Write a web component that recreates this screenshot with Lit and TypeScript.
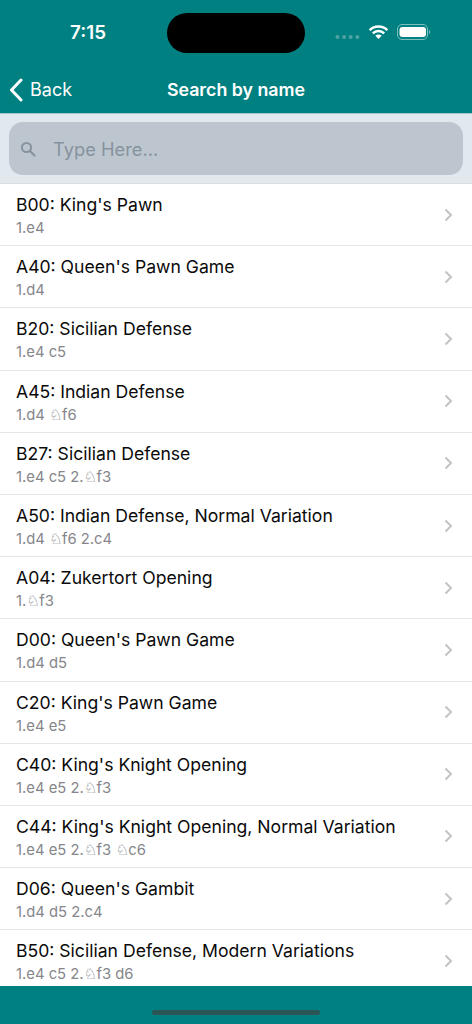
import { LitElement, html, css, svg } from "lit";
import { customElement } from "lit/decorators.js";

const N = "\u2658";
const rows: [string, string][] = [
  ["B00: King's Pawn", "1.e4"],
  ["A40: Queen's Pawn Game", "1.d4"],
  ["B20: Sicilian Defense", "1.e4 c5"],
  ["A45: Indian Defense", `1.d4 ${N}f6`],
  ["B27: Sicilian Defense", `1.e4 c5 2.${N}f3`],
  ["A50: Indian Defense, Normal Variation", `1.d4 ${N}f6 2.c4`],
  ["A04: Zukertort Opening", `1.${N}f3`],
  ["D00: Queen's Pawn Game", "1.d4 d5"],
  ["C20: King's Pawn Game", "1.e4 e5"],
  ["C40: King's Knight Opening", `1.e4 e5 2.${N}f3`],
  ["C44: King's Knight Opening, Normal Variation", `1.e4 e5 2.${N}f3 ${N}c6`],
  ["D06: Queen's Gambit", "1.d4 d5 2.c4"],
  ["B50: Sicilian Defense, Modern Variations", `1.e4 c5 2.${N}f3 d6`],
];

const moves = (s: string) =>
  s.split(N).map((part, i) => (i === 0 ? part : html`<span class="knight">${N}</span>${part}`));

@customElement("app-root")
export class AppRoot extends LitElement {
  static styles = css`
    :host {
      display: flex;
      flex-direction: column;
      width: 472px;
      height: 1024px;
      overflow: hidden;
      background: #fff;
      font-family: Inter, "Liberation Sans", "DejaVu Sans", sans-serif;
      color: #0a0a0a;
    }
    .top {
      height: 113px;
      flex: none;
      background: #008080;
      color: #fff;
      box-sizing: border-box;
      display: flex;
      flex-direction: column;
    }
    .status {
      height: 66px;
      flex: none;
      display: grid;
      grid-template-columns: 167px 138px 1fr;
      box-sizing: border-box;
      padding-top: 13px;
    }
    .time {
      font-size: 18.8px;
      font-weight: 600;
      text-align: center;
      padding: 7px 0 0 9px;
      line-height: 26px;
    }
    .island {
      height: 40px;
      border-radius: 20px;
      background: #000;
    }
    .sys {
      display: flex;
      align-items: flex-start;
      padding: 11px 0 0 30px;
    }
    .sys svg { display: block; }
    .nav {
      position: relative;
      flex: 1;
      display: flex;
      align-items: center;
      justify-content: center;
    }
    .title {
      font-size: 17.8px;
      font-weight: 600;
    }
    .back {
      position: absolute;
      left: 9px;
      top: 11px;
      display: flex;
      align-items: center;
      gap: 7px;
      font-size: 18px;
      line-height: 26px;
    }
    .searchbar {
      height: 71px;
      flex: none;
      box-sizing: border-box;
      background: #e1e8ee;
      padding: 8px 9px;
      border-top: 1px solid #a8c4c8;
      border-bottom: 1px solid #dcdfe2;
    }
    .field {
      height: 100%;
      box-sizing: border-box;
      border-radius: 14px;
      background: #bdc6cf;
      display: flex;
      align-items: center;
      padding-left: 11px;
      gap: 17px;
      color: #86939e;
      font-size: 18.3px;
    }
    .list {
      flex: 1;
      min-height: 0;
      overflow: hidden;
    }
    .row {
      height: 62.2px;
      box-sizing: border-box;
      border-bottom: 1px solid #e6e6e6;
      padding: 9px 19px 0 16px;
      display: flex;
      align-items: center;
      justify-content: space-between;
    }
    .text { align-self: flex-start; }
    .name {
      font-size: 17.6px;
      line-height: 24px;
      white-space: nowrap;
    }
    .sub {
      font-size: 14.8px;
      line-height: 22px;
      color: #86868b;
      white-space: nowrap;
    }
    .knight {
      font-family: "DejaVu Sans", sans-serif;
      font-size: 15.5px;
      letter-spacing: -1px;
      color: #77777c;
    }
    .chev { display: block; margin-bottom: 9px; }
    .bottom {
      height: 38px;
      flex: none;
      background: #008080;
      display: flex;
      justify-content: center;
      padding-top: 24px;
      box-sizing: border-box;
    }
    .home {
      width: 168px;
      height: 5px;
      border-radius: 3px;
      background: #2b5557;
    }
  `;

  render() {
    return html`
      <div class="top">
        <div class="status">
          <div class="time">7:15</div>
          <div class="island"></div>
          <div class="sys">
            <svg width="96" height="18" viewBox="0 0 96 18">
              ${[0, 1, 2, 3].map((i) => svg`<circle cx=${2.5 + i * 6.6} cy="13" r="2" fill="#4fa3a3"></circle>`)}
              <path d="M34.66 6.16a12.5 12.5 0 0 1 17.68 0M37.84 9.34a8 8 0 0 1 11.32 0" fill="none" stroke="#fff" stroke-width="2.5"></path>
              <path d="M40.3 11.8 43.5 15 46.7 11.8a4.6 4.6 0 0 0-6.4 0Z" fill="#fff"></path>
              <rect x="62.5" y="0.5" width="30" height="15" rx="4.5" fill="none" stroke="#7fbfbf" stroke-width="1"></rect>
              <rect x="64.5" y="3" width="26.5" height="10" rx="3" fill="#fff"></rect>
              <path d="M94 6v4a2 2 0 0 0 1.2-2A2 2 0 0 0 94 6Z" fill="#7fbfbf"></path>
            </svg>
          </div>
        </div>
        <div class="nav">
          <div class="back">
            <svg width="14" height="24" viewBox="0 0 14 24"><path d="M12 2 2.5 12 12 22" fill="none" stroke="#fff" stroke-width="3" stroke-linecap="round" stroke-linejoin="round"></path></svg>
            <span>Back</span>
          </div>
          <div class="title">Search by name</div>
        </div>
      </div>
      <div class="searchbar">
        <div class="field">
          <svg width="16" height="16" viewBox="0 0 16 16"><circle cx="6.5" cy="6.5" r="4.6" fill="none" stroke="#86939e" stroke-width="2"></circle><path d="m10 10 4.5 4.5" stroke="#86939e" stroke-width="2.2" stroke-linecap="round"></path></svg>
          <span>Type Here...</span>
        </div>
      </div>
      <div class="list">
        ${rows.map(
          ([n, s]) => html`
            <div class="row">
              <div class="text">
                <div class="name">${n}</div>
                <div class="sub">${moves(s)}</div>
              </div>
              <svg class="chev" width="9" height="14" viewBox="0 0 9 14"><path d="M1.5 1.5 7 7l-5.5 5.5" fill="none" stroke="#c4c4c7" stroke-width="2"></path></svg>
            </div>
          `
        )}
      </div>
      <div class="bottom"><div class="home"></div></div>
    `;
  }
}
